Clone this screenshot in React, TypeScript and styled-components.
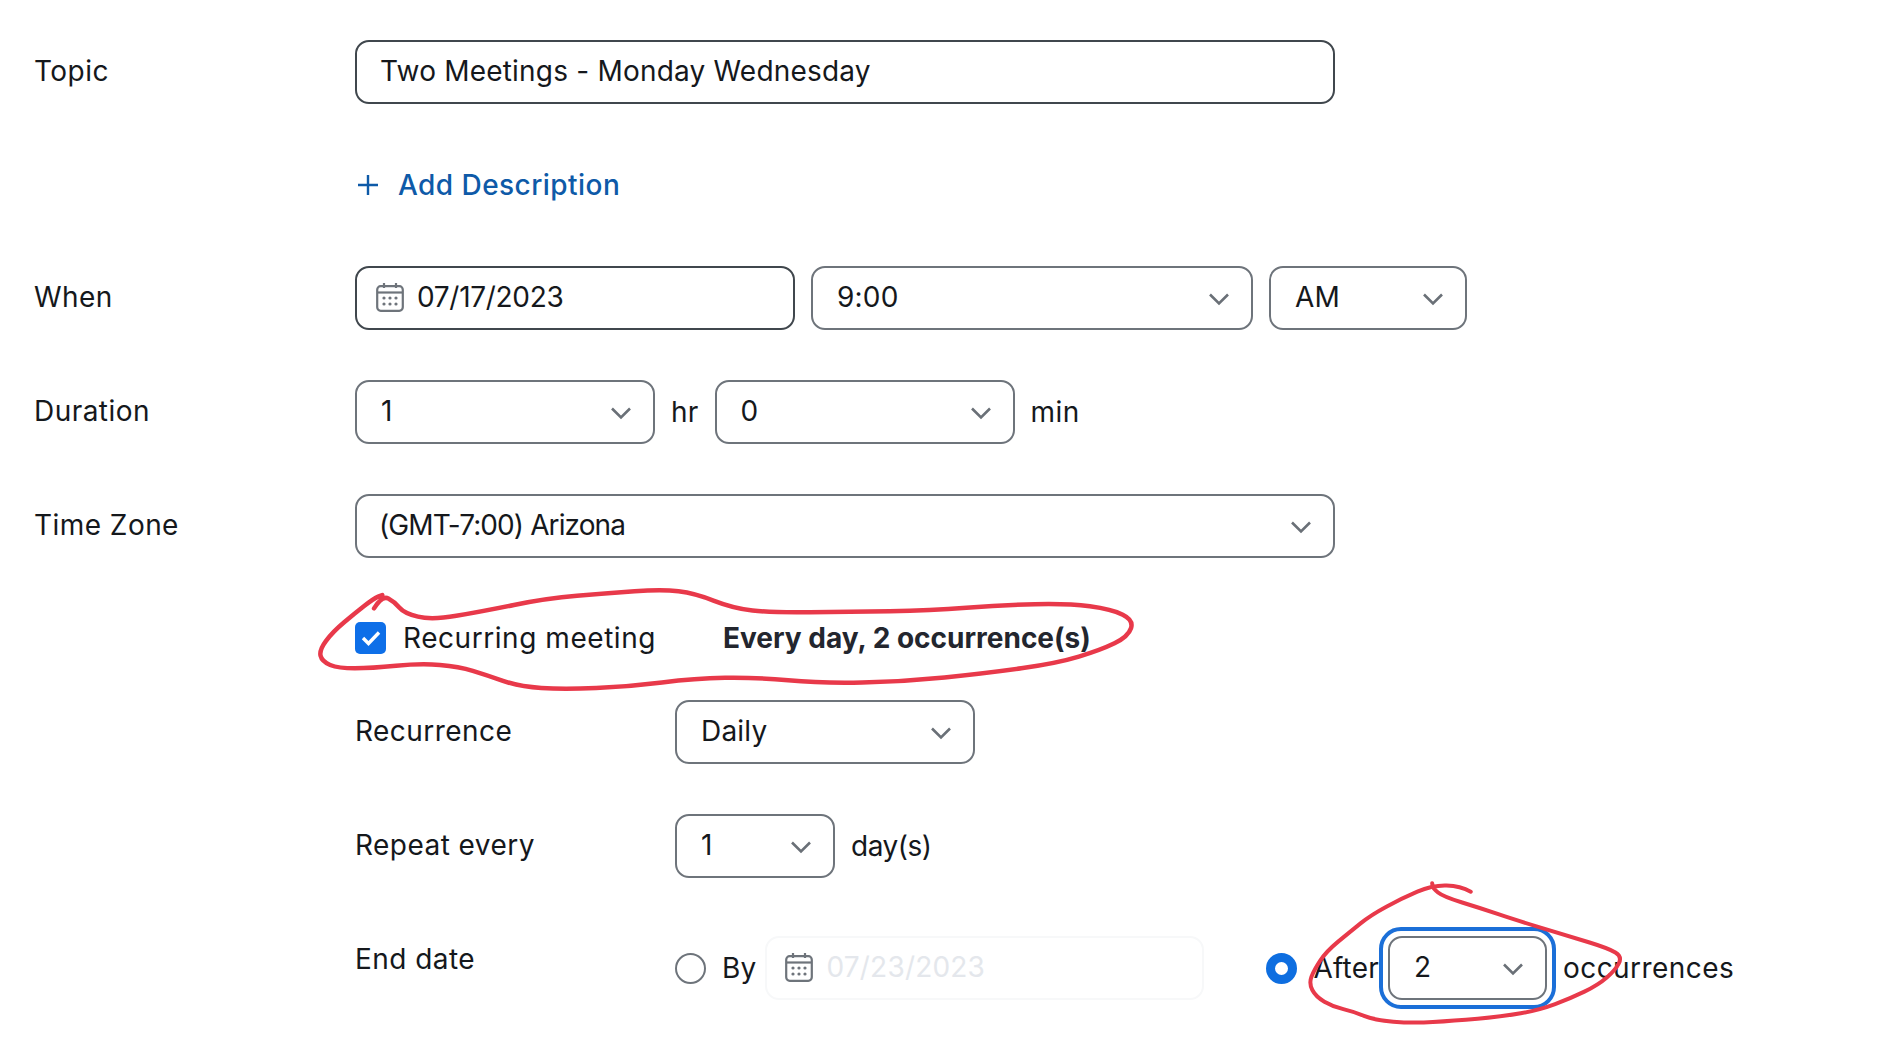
import React from "react"
import styled, { createGlobalStyle } from "styled-components"

const Global = createGlobalStyle`
  html, body { margin: 0; padding: 0; background: #fff; }
  body { font-family: "Inter", "Liberation Sans", sans-serif; color: #15181c; overflow: hidden; }
`

const Page = styled.div`
  position: relative;
  width: 1878px;
  height: 1039px;
  overflow: hidden;
  background: #fff;
  padding: 40px 0 0 34px;
  box-sizing: border-box;
`

const Form = styled.div`
  display: flex;
  flex-direction: column;
  gap: 50px;
`

const Row = styled.div`
  display: grid;
  grid-template-columns: 321px 1fr;
  align-items: center;
  min-height: 64px;
`

const AddRow = styled(Row)`
  min-height: 62px;
`

const RecurRow = styled(Row)`
  min-height: 60px;
`

const Label = styled.div`
  font-size: 28px;
  letter-spacing: 0.45px;
  line-height: 64px;
`

const MainLabel = styled(Label)`
  margin-top: -2px;
`

const Controls = styled.div`
  display: flex;
  align-items: center;
  gap: 16px;
`

const Field = styled.div<{ $w: number; $dark?: boolean; $disabled?: boolean; $icon?: boolean }>`
  width: ${(p) => p.$w}px;
  height: 64px;
  box-sizing: border-box;
  display: flex;
  flex: none;
  align-items: center;
  justify-content: space-between;
  padding: 0 21px 2px ${(p) => (p.$icon ? (p.$disabled ? 18 : 19) : 24)}px;
  border: 2px solid ${(p) => (p.$disabled ? "#f7f8f9" : p.$dark ? "#40474d" : "#6e747b")};
  border-radius: 14px;
  font-size: 28px;
  letter-spacing: 0.2px;
  color: #15181c;
  background: #fff;
`

const TopicText = styled.span`
  margin-left: -1px;
`

const DateValue = styled.div<{ $disabled?: boolean }>`
  display: flex;
  align-items: center;
  gap: 13px;
  color: ${(p) => (p.$disabled ? "#e4e7ec" : "#15181c")};
  letter-spacing: ${(p) => (p.$disabled ? "0.2px" : "-0.3px")};
`

const Condensed = styled.span`
  letter-spacing: -0.9px;
  margin-left: -2px;
`

const ChevronIcon = styled.svg`
  margin-top: 3px;
  flex: none;
`

const AddLink = styled.div`
  display: flex;
  align-items: center;
  gap: 20px;
  padding-left: 3px;
  color: #0e5aa8;
  font-size: 28px;
  letter-spacing: 0.45px;
  font-weight: 500;
`

const Unit = styled.span<{ $ls?: number }>`
  font-size: 28px;
  letter-spacing: ${(p) => p.$ls ?? 0.2}px;
  white-space: nowrap;
`

const RecurBlock = styled.div`
  display: flex;
  flex-direction: column;
  gap: 32px;
`

const Check = styled.div`
  width: 31px;
  height: 32px;
  border-radius: 5px;
  background: #0e6fe8;
  display: flex;
  align-items: center;
  justify-content: center;
  margin-right: 1px;
`

const Summary = styled.span`
  font-size: 28px;
  font-weight: 700;
  color: #23262e;
  margin-left: 51px;
  white-space: nowrap;
`

const SubRows = styled.div`
  display: flex;
  flex-direction: column;
  gap: 50px;
  padding-left: 321px;
`

const SubRow = styled.div`
  display: grid;
  grid-template-columns: 320px 1fr;
  align-items: center;
  min-height: 64px;
`

const SubLabel = styled(Label)`
  margin-top: -2px;
`

const EndRow = styled(SubRow)`
  margin-top: -1px;
  align-items: start;
`

const Radio = styled.div<{ $on?: boolean }>`
  width: 31px;
  height: 31px;
  border-radius: 50%;
  box-sizing: border-box;
  background: #fff;
  border: ${(p) => (p.$on ? "9px solid #0e6ee0" : "2px solid #6e747b")};
  flex: none;
  margin-left: ${(p) => (p.$on ? "46px" : "0")};
`

const ByDate = styled.div`
  margin-left: -7px;
`

const Focus = styled.div`
  padding: 5px;
  border: 4px solid #1b6fd8;
  border-radius: 22px;
  margin-left: -16px;
  margin-right: -9px;
`

const Scribbles = styled.svg`
  position: absolute;
  left: 0;
  top: 0;
  pointer-events: none;
`

const smooth = (pts: number[][]) => {
  let d = `M${pts[0][0]} ${pts[0][1]}`
  for (let i = 1; i < pts.length - 1; i++) {
    const mx = (pts[i][0] + pts[i + 1][0]) / 2
    const my = (pts[i][1] + pts[i + 1][1]) / 2
    d += ` Q${pts[i][0]} ${pts[i][1]} ${mx} ${my}`
  }
  const last = pts[pts.length - 1]
  return d + ` L${last[0]} ${last[1]}`
}

const topScribble = [
  [135, 115], [150, 76], [172, 95], [190, 130], [240, 150], [330, 125], [450, 85], [560, 70], [660, 58], [720, 70],
  [790, 115], [860, 128], [1000, 125], [1150, 122], [1280, 105], [1400, 100], [1480, 118], [1520, 150],
  [1510, 200], [1460, 240], [1380, 280], [1250, 310], [1100, 335], [950, 340], [830, 322], [720, 325],
  [600, 350], [480, 358], [400, 350], [340, 315], [290, 290], [220, 280], [130, 295], [70, 295], [40, 275],
  [35, 240], [60, 185], [100, 130], [135, 85], [150, 75],
]

const bottomScribble = [
  [670, 95], [640, 78], [560, 75], [470, 115], [380, 165], [320, 215], [250, 275], [215, 330], [200, 370],
  [220, 410], [270, 440], [330, 455], [390, 480], [500, 490], [620, 482], [760, 470], [870, 450], [960, 415],
  [1040, 375], [1090, 330], [1110, 290], [1070, 265], [960, 230], [800, 180], [700, 145], [590, 110], [560, 85], [558, 70],
]

const Chevron = () => (
  <ChevronIcon width="22" height="14" viewBox="0 0 22 14" fill="none">
    <path d="M2 2.5L11 11.5L20 2.5" stroke="#6a7077" strokeWidth="2.6" />
  </ChevronIcon>
)

const Calendar = () => (
  <svg width="28" height="30" viewBox="0 0 28 30" fill="none">
    <rect x="1.2" y="4.2" width="25.6" height="24.6" rx="3.5" stroke="#6e747b" strokeWidth="2.2" />
    <path d="M1.5 10.5H26.5" stroke="#6e747b" strokeWidth="2.2" />
    <path d="M8 1V6M20 1V6" stroke="#6e747b" strokeWidth="2.2" />
    {[8, 14, 20].map((x) =>
      [16, 22].map((y) => <circle key={`${x}-${y}`} cx={x} cy={y} r="1.6" fill="#6e747b" />)
    )}
  </svg>
)

const Select = ({ w, value, condensed }: { w: number; value: string; condensed?: boolean }) => (
  <Field $w={w}>
    {condensed ? <Condensed>{value}</Condensed> : <span>{value}</span>}
    <Chevron />
  </Field>
)

export default function App() {
  return (
    <Page>
      <Global />
      <Form>
        <Row>
          <MainLabel>Topic</MainLabel>
          <Field $w={980} $dark><TopicText>Two Meetings - Monday Wednesday</TopicText></Field>
        </Row>
        <AddRow>
          <span />
          <AddLink>
            <svg width="20" height="20" viewBox="0 0 20 20" fill="none">
              <path d="M10 0V20M0 10H20" stroke="#0e5aa8" strokeWidth="2.4" />
            </svg>
            Add Description
          </AddLink>
        </AddRow>
        <Row>
          <MainLabel>When</MainLabel>
          <Controls>
            <Field $w={440} $dark $icon>
              <DateValue><Calendar />07/17/2023</DateValue>
            </Field>
            <Select w={442} value="9:00" />
            <Select w={198} value="AM" />
          </Controls>
        </Row>
        <Row>
          <MainLabel>Duration</MainLabel>
          <Controls>
            <Select w={300} value="1" />
            <Unit>hr</Unit>
            <Select w={300} value="0" />
            <Unit $ls={0.5}>min</Unit>
          </Controls>
        </Row>
        <Row>
          <MainLabel>Time Zone</MainLabel>
          <Select w={980} value="(GMT-7:00) Arizona" condensed />
        </Row>
        <RecurBlock>
          <RecurRow>
            <span />
            <Controls>
              <Check>
                <svg width="20" height="16" viewBox="0 0 20 16" fill="none">
                  <path d="M2 8L7.5 13.5L18 2.5" stroke="#fff" strokeWidth="3.4" />
                </svg>
              </Check>
              <Unit $ls={0.55}>Recurring meeting</Unit>
              <Summary>Every day, 2 occurrence(s)</Summary>
            </Controls>
          </RecurRow>
          <SubRows>
            <SubRow>
              <SubLabel>Recurrence</SubLabel>
              <Select w={300} value="Daily" />
            </SubRow>
            <SubRow>
              <SubLabel>Repeat every</SubLabel>
              <Controls>
                <Select w={160} value="1" />
                <Unit $ls={-0.5}>day(s)</Unit>
              </Controls>
            </SubRow>
            <EndRow>
              <Label>End date</Label>
              <Controls>
                <Radio />
                <Unit>By</Unit>
                <ByDate>
                  <Field $w={439} $disabled $icon>
                    <DateValue $disabled><Calendar />07/23/2023</DateValue>
                  </Field>
                </ByDate>
                <Radio $on />
                <Unit>After</Unit>
                <Focus><Select w={159} value="2" /></Focus>
                <Unit $ls={0.45}>occurrences</Unit>
              </Controls>
            </EndRow>
          </SubRows>
        </RecurBlock>
      </Form>
      <Scribbles width="1878" height="1039" viewBox="0 0 1878 1039" fill="none">
        <g transform="translate(300 570) scale(0.5485 0.3333)" stroke="#e8394a" strokeLinecap="round" strokeLinejoin="round">
          <path d={smooth(topScribble)} strokeWidth="4.5" vectorEffect="non-scaling-stroke" />
        </g>
        <g transform="translate(1240 860) scale(0.3444 0.3333)" stroke="#e8394a" strokeLinecap="round" strokeLinejoin="round">
          <path d={smooth(bottomScribble)} strokeWidth="4" vectorEffect="non-scaling-stroke" />
        </g>
      </Scribbles>
    </Page>
  )
}
